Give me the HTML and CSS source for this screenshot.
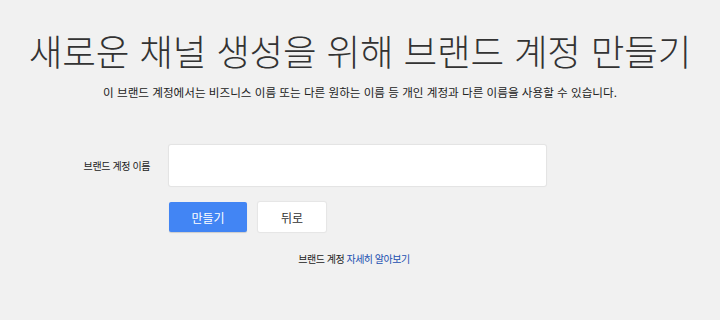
FILE: index.html
```html
<!DOCTYPE html>
<html lang="ko">
<head>
  <meta charset="UTF-8">
  <title>브랜드 계정 만들기</title>
  <link rel="stylesheet" href="styles.css">
</head>
<body>
  <div class="page">
    <h1 class="title">새로운 채널 생성을 위해 브랜드 계정 만들기</h1>
    <p class="subtitle">이 브랜드 계정에서는 비즈니스 이름 또는 다른 원하는 이름 등 개인 계정과 다른 이름을 사용할 수 있습니다.</p>

    <div class="form">
      <div class="form-row">
        <label class="label" for="brandName">브랜드 계정 이름</label>
        <input type="text" id="brandName" class="name-input">
      </div>
      <div class="actions">
        <button class="btn btn-primary">만들기</button>
        <button class="btn btn-secondary">뒤로</button>
      </div>
    </div>

    <p class="help">브랜드 계정 <a href="#">자세히 알아보기</a></p>
  </div>
</body>
</html>
```

FILE: styles.css
```css
body {
  margin: 0;
  padding: 0;
  background-color: #f1f1f1;
  font-family: "Noto Sans CJK KR", "Noto Sans", sans-serif;
  color: #222;
}

.page {
  width: 720px;
  padding-top: 27px;
}

.title {
  margin: 0;
  text-align: center;
  font-family: "Noto Sans CJK KR Light", "Noto Sans CJK KR", sans-serif;
  font-size: 36.6px;
  font-weight: 300;
  line-height: 48px;
  color: #333;
  letter-spacing: -0.2px;
}

.subtitle {
  margin: 8px 0 0;
  text-align: center;
  font-size: 11.6px;
  line-height: 18px;
  color: #222;
}

.form {
  margin-top: 44px;
}

.form-row {
  display: flex;
  align-items: center;
}

.label {
  width: 150px;
  text-align: right;
  padding-right: 19px;
  font-size: 10px;
  letter-spacing: -0.4px;
  color: #222;
}

.name-input {
  width: 377px;
  height: 41px;
  box-sizing: border-box;
  border: none;
  border-radius: 2px;
  background: #fff;
  box-shadow: 0 0 1px 1px rgba(0, 0, 0, 0.06);
  outline: none;
}

.actions {
  display: flex;
  gap: 11px;
  margin: 16px 0 0 169px;
}

.btn {
  height: 30px;
  border: none;
  border-radius: 2px;
  font-family: inherit;
  font-size: 12px;
  cursor: pointer;
}

.btn-primary {
  width: 78px;
  background-color: #4285f4;
  color: #fff;
  box-shadow: 0 1px 1px rgba(0, 0, 0, 0.15);
}

.btn-secondary {
  width: 68px;
  background-color: #fff;
  color: #333;
  box-shadow: 0 0 1px 1px rgba(0, 0, 0, 0.05);
}

.help {
  margin: 19px 0 0;
  padding-right: 12px;
  text-align: center;
  font-size: 10px;
  letter-spacing: -0.5px;
  color: #222;
}

.help a {
  color: #1a4fb0;
  text-decoration: none;
}
```
